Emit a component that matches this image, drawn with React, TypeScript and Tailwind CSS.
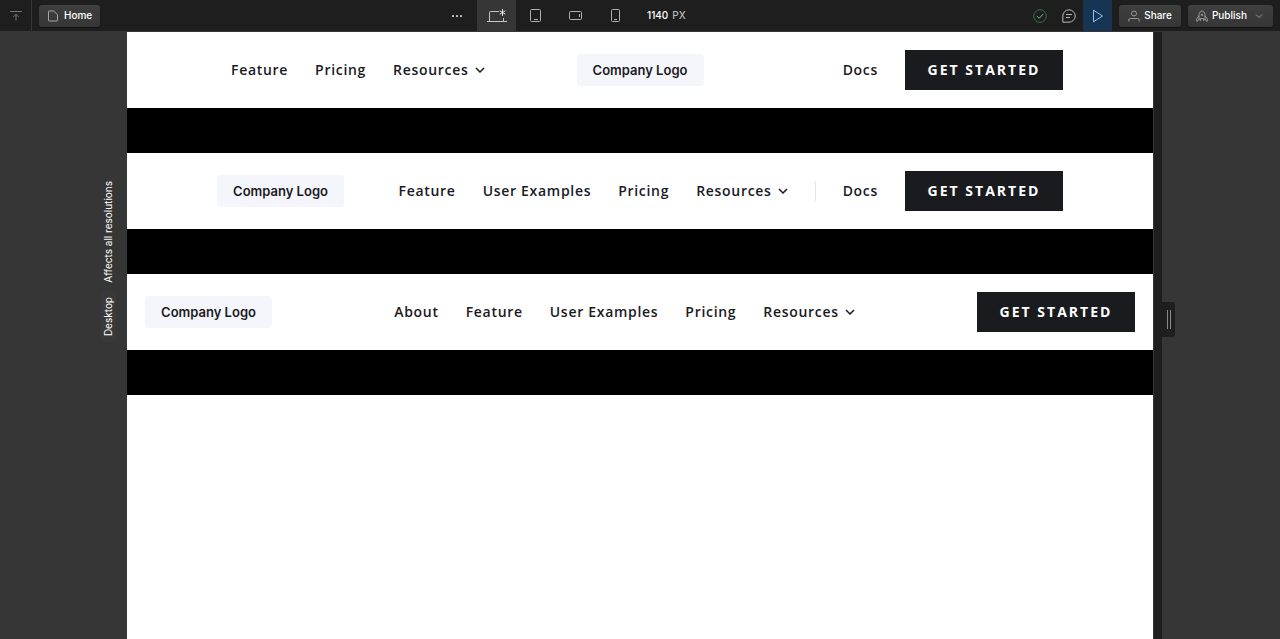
import type { ReactNode } from "react";

function Icon({ w, h, className = "", children }: { w: number; h: number; className?: string; children: ReactNode }) {
  return (
    <svg width={w} height={h} viewBox={`0 0 ${w} ${h}`} fill="none" stroke="currentColor" className={`shrink-0 ${className}`} aria-hidden="true">
      {children}
    </svg>
  );
}

const devices = [
  {
    name: "Desktop",
    active: true,
    icon: (
      <Icon w={22} h={16} className="text-[#c4c4c4]">
        <path d="M3.5 13V4.5a1 1 0 0 1 1-1H13M17.5 10v3" />
        <path d="M1 13.5h20" />
        <path d="M16.5 1v7M13.7 2.8l5.6 3.4M19.3 2.8l-5.6 3.4" stroke="#e0e0e0" />
      </Icon>
    ),
  },
  {
    name: "Tablet",
    active: false,
    icon: (
      <Icon w={12} h={14} className="text-[#b0b0b0]">
        <rect x="0.5" y="0.5" width="10" height="12" rx="1" />
        <path d="M4 10.5h4" />
      </Icon>
    ),
  },
  {
    name: "Mobile landscape",
    active: false,
    icon: (
      <Icon w={14} h={10} className="text-[#b0b0b0]">
        <rect x="0.5" y="0.5" width="12" height="8" rx="1" />
        <path d="M10.5 3v3" />
      </Icon>
    ),
  },
  {
    name: "Mobile portrait",
    active: false,
    icon: (
      <Icon w={10} h={14} className="text-[#b0b0b0]">
        <rect x="0.5" y="0.5" width="8" height="12" rx="1" />
        <path d="M3 10.5h3" />
      </Icon>
    ),
  },
];

const barButton =
  "flex h-[22px] items-center rounded-[3px] bg-gradient-to-b from-[#3f3f3f] to-[#363636] text-[10px] font-medium text-white shadow-[0_1px_1px_rgba(0,0,0,0.5)]";

function TopBar() {
  return (
    <header className="grid h-8 shrink-0 grid-cols-[1fr_408px_1fr] border-b border-[#363636] bg-[#1e1e1e] font-['Inter',sans-serif]">
      <div className="flex items-center">
        <button aria-label="Exit" className="flex h-full w-8 items-center justify-center border-r border-[#363636] text-[#757575]">
          <Icon w={12} h={12}>
            <path d="M0 1.5h12" />
            <path d="M6 10.5V4.5M3.2 7 6 4.2 8.8 7" />
          </Icon>
        </button>
        <button className={`${barButton} ml-[7px] gap-[5px] px-2`}>
          <Icon w={12} h={12} className="text-[#a6a6a6]">
            <path d="M1.5 1.5a.5.5 0 0 1 .5-.5h4.5l4 3.5v6a.5.5 0 0 1-.5.5H2a.5.5 0 0 1-.5-.5z" />
          </Icon>
          Home
        </button>
      </div>

      <div className="flex items-stretch">
        <button aria-label="More" className="flex w-[41px] items-center justify-center text-[#c4c4c4]">
          <svg width="10" height="2" viewBox="0 0 10 2" fill="currentColor" aria-hidden="true">
            <rect width="2" height="2" rx="0.5" />
            <rect x="4" width="2" height="2" rx="0.5" />
            <rect x="8" width="2" height="2" rx="0.5" />
          </svg>
        </button>
        {devices.map((d) => (
          <button
            key={d.name}
            aria-label={d.name}
            className={`flex items-center justify-center ${d.active ? "w-[39px] bg-[#363636]" : "w-10"}`}
          >
            {d.icon}
          </button>
        ))}
        <p className="ml-[11px] flex gap-1 self-center text-[10px] font-medium text-white">
          1140 <span className="text-[#b8b8b8]">PX</span>
        </p>
      </div>

      <div className="flex items-center justify-end pr-[7px]">
        <button aria-label="Saved" className="flex h-full w-[29px] items-center justify-center text-[#37704a]">
          <Icon w={14} h={14}>
            <circle cx="7" cy="7" r="6.3" />
            <path d="m4 7.2 2.2 2.1L10.2 5" stroke="#63c489" />
          </Icon>
        </button>
        <button aria-label="Comments" className="flex h-full w-[29px] items-center justify-center text-[#b8b8b8]">
          <Icon w={14} h={14}>
            <path d="M.8 13.2V7A6.2 6.2 0 1 1 7 13.2z" />
            <path d="M4 5.5h6M4 8.5h4" />
          </Icon>
        </button>
        <button aria-label="Preview" className="flex h-full w-[29px] items-center justify-center bg-[#173453] text-[#8ac2ff]">
          <Icon w={12} h={14}>
            <path d="M1.5 1.2 10.5 7l-9 5.8z" strokeLinejoin="round" />
          </Icon>
        </button>
        <button className={`${barButton} ml-[7px] gap-1 px-[9px]`}>
          <Icon w={12} h={12} className="text-[#9a9a9a]">
            <circle cx="6" cy="3.5" r="2.5" />
            <path d="M.8 11.5V10A1.5 1.5 0 0 1 2.3 8.500h7.4A1.5 1.5 0 0 1 11.2 10v1.5" />
          </Icon>
          Share
        </button>
        <button className={`${barButton} ml-[7px] gap-1 pr-[10px] pl-2`}>
          <Icon w={12} h={12} className="text-[#9a9a9a]">
            <path d="M3 9.5V4.5C3 2.8 4.5 1.3 6 .8 7.5 1.3 9 2.8 9 4.5v5M3 6 .8 8.8v2.7L3 9.5l1.5 1V8.5h3v2L9 9.5l2.2 2V8.8L9 6" />
            <circle cx="6" cy="4.8" r=".8" />
          </Icon>
          Publish
          <Icon w={8} h={6} className="ml-1 text-[#9a9a9a]">
            <path d="m1 1.5 3 3 3-3" />
          </Icon>
        </button>
      </div>
    </header>
  );
}

function Logo() {
  return (
    <a
      href="#"
      className="flex h-8 w-[127px] items-center justify-center rounded-[3px] bg-[#f5f6fb] font-['Inter',sans-serif] text-[13px] font-semibold tracking-normal whitespace-nowrap text-[#1a1b1f]"
    >
      Company Logo
    </a>
  );
}

function NavLink({ children }: { children: ReactNode }) {
  return (
    <a href="#" className="whitespace-nowrap">
      {children}
    </a>
  );
}

function Resources() {
  return (
    <button className="flex items-center gap-[6px] tracking-wider whitespace-nowrap">
      Resources
      <Icon w={10} h={6}>
        <path d="m1 1 4 4 4-4" strokeWidth="1.5" />
      </Icon>
    </button>
  );
}

function GetStarted() {
  return (
    <a
      href="#"
      className="flex h-10 w-[158px] items-center justify-center bg-[#1a1b1f] text-[14px] font-bold tracking-[2px] whitespace-nowrap text-white"
    >
      GET STARTED
    </a>
  );
}

const links = "flex items-center gap-[27px]";
const navBar = "bg-white py-[18px] font-['Open_Sans',sans-serif] text-[14px] leading-5 font-semibold tracking-wider text-[#1a1b1f]";

function Spacer() {
  return <div className="h-[45px] bg-black" />;
}

export default function App() {
  return (
    <div className="flex min-h-screen flex-col bg-[#363636]">
      <TopBar />
      <div className="flex flex-1">
        <aside className="flex w-[127px] shrink-0 flex-col items-end gap-2 pt-[149px] pr-[11px] font-['Inter',sans-serif] text-[10px] leading-[15px] text-white">
          <p className="rotate-180 whitespace-nowrap [writing-mode:vertical-rl]">Affects all resolutions</p>
          <p className="rotate-180 rounded-[2px] bg-[#393939] pt-[6px] pb-[6px] whitespace-nowrap [writing-mode:vertical-rl]">Desktop</p>
        </aside>

        <main className="min-w-0 flex-1 bg-white">
          <nav className={`${navBar} grid grid-cols-[1fr_auto_1fr] items-center px-[90px]`}>
            <div className={`${links} pl-[14px]`}>
              <NavLink>Feature</NavLink>
              <NavLink>Pricing</NavLink>
              <Resources />
            </div>
            <Logo />
            <div className={`${links} justify-end`}>
              <NavLink>Docs</NavLink>
              <GetStarted />
            </div>
          </nav>
          <Spacer />
          <nav className={`${navBar} flex items-center justify-between px-[90px]`}>
            <Logo />
            <div className={links}>
              <NavLink>Feature</NavLink>
              <NavLink>User Examples</NavLink>
              <NavLink>Pricing</NavLink>
              <Resources />
              <div className="h-5 w-px bg-[#e4e6f1]" />
              <NavLink>Docs</NavLink>
              <GetStarted />
            </div>
          </nav>
          <Spacer />
          <nav className={`${navBar} flex items-center justify-between px-[18px]`}>
            <Logo />
            <div className={links}>
              <NavLink>About</NavLink>
              <NavLink>Feature</NavLink>
              <NavLink>User Examples</NavLink>
              <NavLink>Pricing</NavLink>
              <Resources />
            </div>
            <GetStarted />
          </nav>
          <Spacer />
        </main>

        <aside className="flex w-[127px] shrink-0">
          <div className="w-[9px] border-l border-[#363636] bg-[#1e1e1e]" />
          <div className="flex items-center pb-8">
            <button aria-label="Resize canvas" className="flex h-[35px] w-[13px] items-center justify-center gap-[2px] rounded-r-[3px] bg-[#1e1e1e]">
              <span className="h-[19px] w-px bg-[#8a8a8a]" />
              <span className="h-[19px] w-px bg-[#8a8a8a]" />
            </button>
          </div>
        </aside>
      </div>
    </div>
  );
}
